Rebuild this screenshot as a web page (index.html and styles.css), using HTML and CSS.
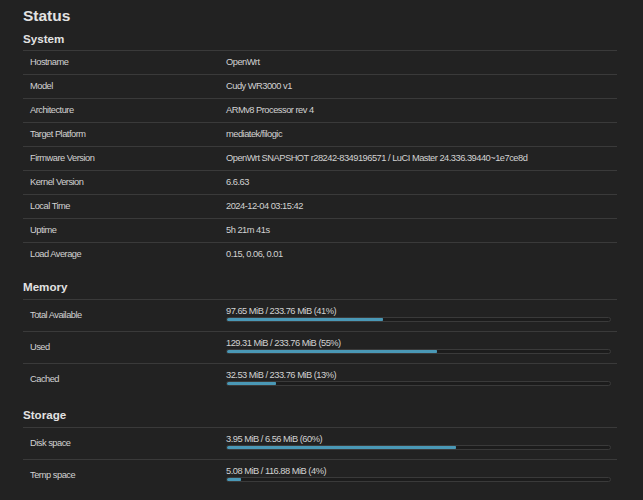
FILE: index.html
```html
<!DOCTYPE html>
<html lang="en">
<head>
  <meta charset="UTF-8">
  <meta name="viewport" content="width=device-width, initial-scale=1.0">
  <title>Status - LuCI</title>
  <link rel="stylesheet" href="styles.css">
</head>
<body>
  <h2 class="page-title">Status</h2>

  <h3 class="section-title first">System</h3>
  <div class="table">
    <div class="tr"><div class="td label">Hostname</div><div class="td">OpenWrt</div></div>
    <div class="tr"><div class="td label">Model</div><div class="td">Cudy WR3000 v1</div></div>
    <div class="tr"><div class="td label">Architecture</div><div class="td">ARMv8 Processor rev 4</div></div>
    <div class="tr"><div class="td label">Target Platform</div><div class="td">mediatek/filogic</div></div>
    <div class="tr"><div class="td label">Firmware Version</div><div class="td">OpenWrt SNAPSHOT r28242-8349196571 / LuCI Master 24.336.39440~1e7ce8d</div></div>
    <div class="tr"><div class="td label">Kernel Version</div><div class="td">6.6.63</div></div>
    <div class="tr"><div class="td label">Local Time</div><div class="td">2024-12-04 03:15:42</div></div>
    <div class="tr"><div class="td label">Uptime</div><div class="td">5h 21m 41s</div></div>
    <div class="tr"><div class="td label">Load Average</div><div class="td">0.15, 0.06, 0.01</div></div>
  </div>

  <h3 class="section-title">Memory</h3>
  <div class="table">
    <div class="tr bar-row">
      <div class="td label">Total Available</div>
      <div class="td">
        <div class="cbi-progressbar-title">97.65 MiB / 233.76 MiB (41%)</div>
        <div class="cbi-progressbar"><div style="width: 41%"></div></div>
      </div>
    </div>
    <div class="tr bar-row">
      <div class="td label">Used</div>
      <div class="td">
        <div class="cbi-progressbar-title">129.31 MiB / 233.76 MiB (55%)</div>
        <div class="cbi-progressbar"><div style="width: 55%"></div></div>
      </div>
    </div>
    <div class="tr bar-row">
      <div class="td label">Cached</div>
      <div class="td">
        <div class="cbi-progressbar-title">32.53 MiB / 233.76 MiB (13%)</div>
        <div class="cbi-progressbar"><div style="width: 13%"></div></div>
      </div>
    </div>
  </div>

  <h3 class="section-title storage">Storage</h3>
  <div class="table">
    <div class="tr bar-row">
      <div class="td label">Disk space</div>
      <div class="td">
        <div class="cbi-progressbar-title">3.95 MiB / 6.56 MiB (60%)</div>
        <div class="cbi-progressbar"><div style="width: 60%"></div></div>
      </div>
    </div>
    <div class="tr bar-row">
      <div class="td label">Temp space</div>
      <div class="td">
        <div class="cbi-progressbar-title">5.08 MiB / 116.88 MiB (4%)</div>
        <div class="cbi-progressbar"><div style="width: 4%"></div></div>
      </div>
    </div>
  </div>
</body>
</html>
```

FILE: styles.css
```css
html, body {
  background: #222;
}
body {
  margin: 0;
  padding: 6px 26px 0 23px;
  font-family: "Liberation Sans", Arial, sans-serif;
  font-size: 9.3px;
  letter-spacing: -0.5px;
  color: #d2d2d2;
}
.page-title {
  margin: 0;
  font-size: 15.5px;
  line-height: 20px;
  font-weight: bold;
  letter-spacing: 0;
  color: #e2e2e2;
}
.section-title {
  margin: 14px 0 5px;
  font-size: 11.6px;
  line-height: 14px;
  font-weight: bold;
  letter-spacing: 0;
  color: #e2e2e2;
}
.section-title.first {
  margin-top: 6px;
  margin-bottom: 4px;
}
.section-title.storage {
  margin-top: 13px;
}
.table {
  display: flex;
  flex-direction: column;
}
.tr {
  display: grid;
  grid-template-columns: 203px 1fr;
  align-items: center;
  height: 24px;
  border-top: 1px solid #3a3a3a;
  box-sizing: border-box;
}
.td {
  padding: 0 6px 0 0;
  line-height: 11px;
}
.td.label {
  padding-left: 7px;
}
.tr.bar-row {
  height: 32px;
}
.bar-row .td:last-child {
  align-self: start;
  padding-top: 6px;
}
.cbi-progressbar-title {
  line-height: 11px;
}
.cbi-progressbar {
  margin-top: 0;
  height: 5px;
  border: 1px solid #3a3a3a;
  border-radius: 3px;
  background: #1c1c1c;
  box-sizing: border-box;
  overflow: hidden;
  position: relative;
}
.cbi-progressbar > div {
  position: absolute;
  left: -1px;
  top: -1px;
  bottom: -1px;
  background: #4a98b6;
  border-radius: 3px;
}
```
